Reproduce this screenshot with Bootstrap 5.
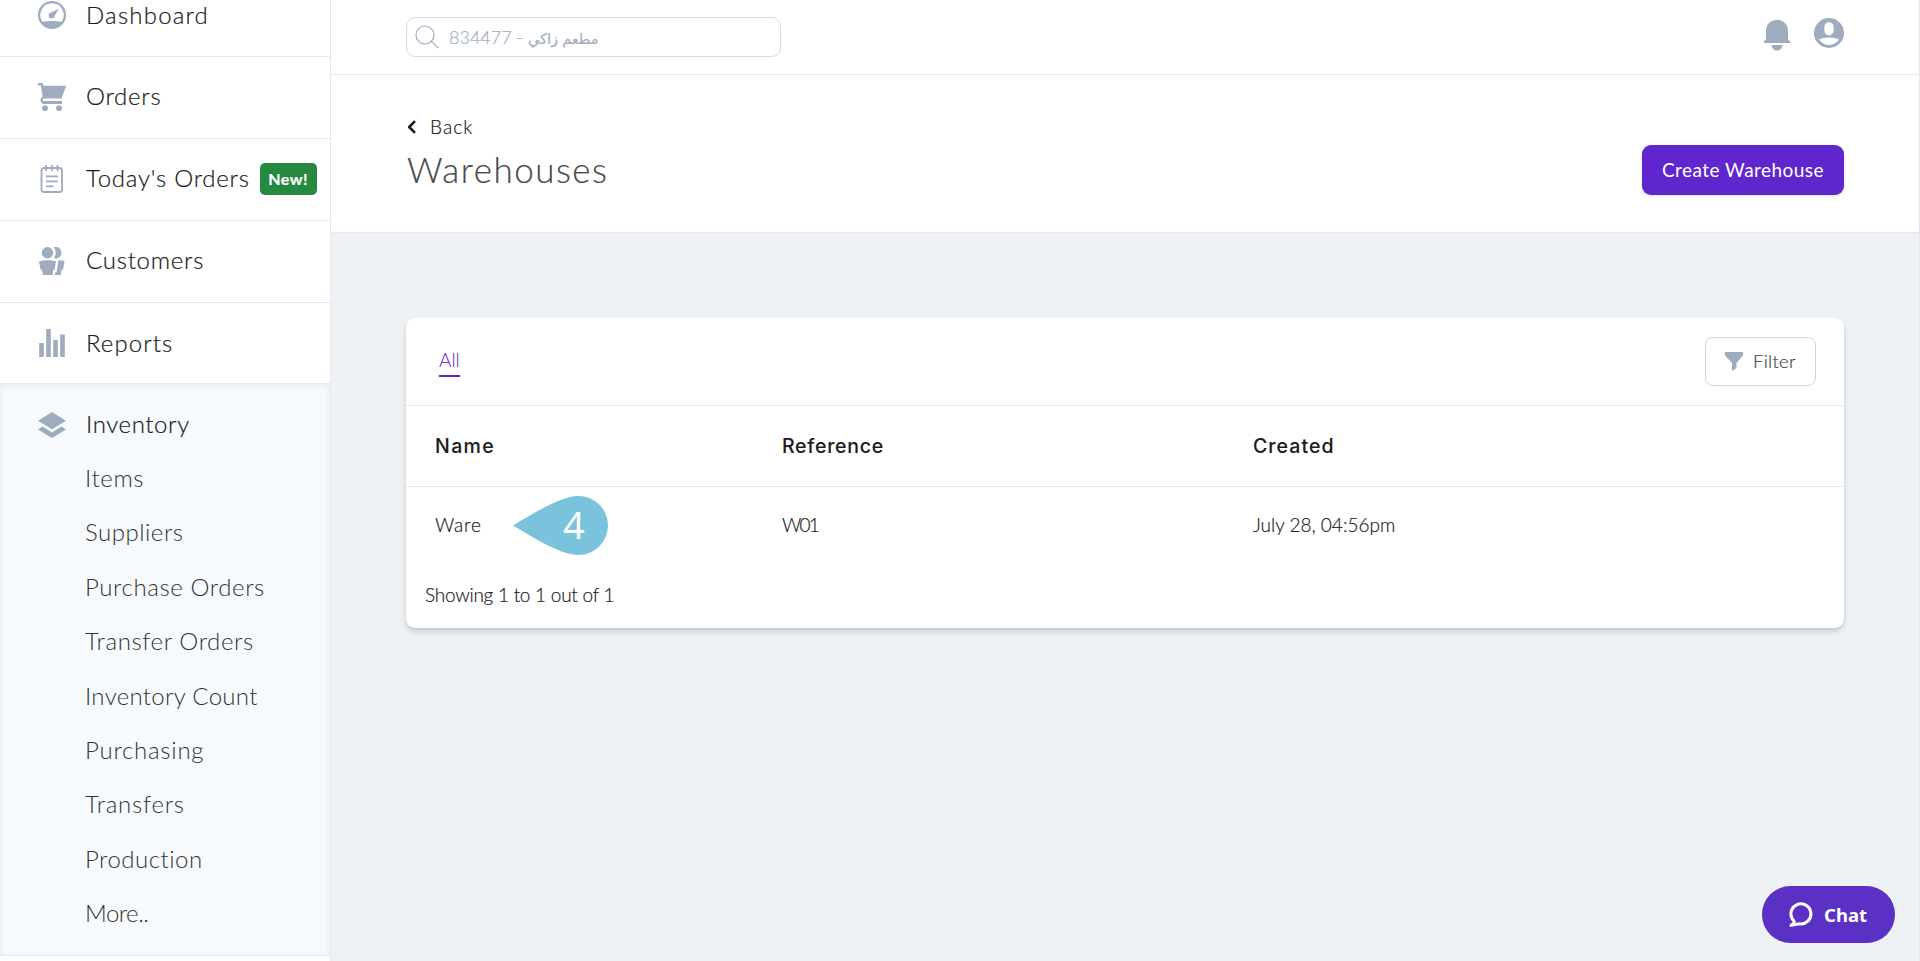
<!DOCTYPE html>
<html lang="en">
<head>
<meta charset="utf-8">
<title>Warehouses</title>
<link href="https://cdn.jsdelivr.net/npm/bootstrap@5.3.0/dist/css/bootstrap.min.css" rel="stylesheet">
<script src="https://cdn.jsdelivr.net/npm/bootstrap@5.3.0/dist/js/bootstrap.bundle.min.js" defer></script>
<style>
  :root { --line: #e4e8f5; --ico: #9fabbe; --brand: #5f26cd; }
  body { font-family: Lato, "Liberation Sans", sans-serif; font-weight: 300; font-size: 19px; color: #1c1c1c; background: #eef2f5; height: 961px; overflow: hidden; -webkit-text-stroke: .2px; }
  svg { display: block; flex: none; }
  a { color: inherit; text-decoration: none; }
  .side { width: 331px; border-right: 1px solid var(--line); font-size: 24px; }
  .side-row { height: 82px; padding: 0 0 2px 38px; gap: 20px; border-bottom: 1px solid var(--line); white-space: nowrap; line-height: 32px; }
  .side-row span:not(.badge) { margin-top: -1px; }
  .side-row svg, .top svg, .btn-filter svg { fill: var(--ico); }
  .side-row.first { height: 57px; padding-bottom: 26px; }
  .side-row.last { height: 80px; padding-bottom: 0; border: 0; }
  .new-badge { background: #25893f; font: 700 16px/32px Lato, sans-serif; letter-spacing: .5px; width: 57px; height: 32px; padding: 0; border-radius: 5px; margin-left: -10px; }
  .panel { height: 573px; background: #f6fafd; border-bottom: 1px solid var(--line); box-shadow: inset 0 2px 6px rgba(0,0,0,.08); }
  .panel .side-row { height: 68px; padding: 15.5px 0 0 38px; border: 0; }
  .sub-link { height: 54.4px; line-height: 54.4px; padding-left: 85px; color: #333; -webkit-text-stroke: 0; }
  .main-col { border-right: 1px solid var(--line); }
  .top { height: 75px; padding: 0 75px; border-bottom: 1px solid var(--line); }
  .search { width: 375px; height: 40px; border: 1px solid #d5daea; border-radius: 9px; color: #a0aec0; padding-left: 8px; gap: 10px; font-size: 18px; letter-spacing: -1px; }
  .search svg { fill: none; }
  .ar { font: 14.500px "Liberation Sans", "DejaVu Sans", sans-serif; letter-spacing: 0; }
  .heading { height: 158px; padding: 38px 75px 0 75px; border-bottom: 1px solid var(--line); }
  .back-link { padding-left: 2px; gap: 14px; }
  .page-title { font-size: 35px; font-weight: 300; line-height: 44px; color: #4a4a4a; letter-spacing: 1.5px; margin: 5px 0 0 1px; }
  .btn-brand, .btn-brand:hover { width: 202px; height: 50px; background: var(--brand); color: #fff; border: 0; border-radius: 9px; font-size: 19px; font-weight: 400; letter-spacing: .45px; padding: 0; box-shadow: 0 1px 3px rgba(0,0,0,.15); -webkit-text-stroke: 0; margin-top: 32px; }
  .panel-card { margin: 85px 75px 0 75px; height: 310px; border: 0; border-radius: 9px; box-shadow: 0 4px 6px rgba(0,0,0,.12), 0 2px 3px rgba(0,0,0,.07); }
  .tabs-bar { height: 88px; padding: 0 28px 0 33px; border-bottom: 1px solid var(--line); }
  .tab-on { color: var(--brand); border-bottom: 2px solid var(--brand); width: 21px; height: 35px; line-height: 35px; margin-bottom: 4px; white-space: nowrap; -webkit-text-stroke: 0; }
  .btn-filter { width: 111px; height: 49px; border: 1px solid #cbd5e0; border-radius: 8px; color: #444; gap: 10px; padding: 0 0 0 19px; font-size: 18.5px; font-weight: 300; }
  .grid-table { table-layout: fixed; color: inherit; }
  .grid-table th { height: 80px; border-bottom: 1px solid var(--line); font: 500 19.5px Inter, sans-serif; -webkit-text-stroke: .1px; }
  .grid-table td { height: 77px; }
  .grid-table th, .grid-table td { padding: 0 0 0 29px; vertical-align: middle; }
  .col-name { width: 347px; } .col-ref { width: 471px; }
  .ref-code { letter-spacing: -1.8px; }
  .pin { left: 107px; top: 9px; width: 95px; height: 60px; }
  .pin span { position: absolute; left: 50px; top: -1px; font: 38px/59px "Noto Sans", sans-serif; color: #fff; -webkit-text-stroke: 0; }
  .count-note { padding-left: 19px; margin-top: 18px; letter-spacing: -.25px; }
  .chat { right: 25px; bottom: 18px; width: 133px; height: 57px; border-radius: 29px; background: #5a30c5; color: #fff; font: 700 18.5px "Noto Sans", sans-serif; gap: 11px; padding-left: 27px; -webkit-text-stroke: 0; }
  .k-5 { letter-spacing: -.5px; } .k3 { letter-spacing: .3px; } .k5 { letter-spacing: .5px; } .k6 { letter-spacing: .6px; }
  .k8 { letter-spacing: .75px; } .k12 { letter-spacing: 1.05px; } .k13 { letter-spacing: 1.2px; } .k16 { letter-spacing: 1.4px; }
</style>
</head>
<body class="d-flex position-relative">
<nav class="side bg-white flex-shrink-0 vh-100">
  <a class="side-row first d-flex align-items-center" href="#">
    <svg width="28" height="28" viewBox="0 0 28 28"><path fill-rule="evenodd" d="M14 0a14 14 0 1 0 0 28a14 14 0 0 0 0-28zm0 2.300a11.700 11.700 0 0 1 9.500 18.500C21 20.300 17.500 20 14 20s-7 .3-9.500.8A11.700 11.700 0 0 1 14 2.300z"/><path d="M20.800 7.700l-4.200 7a3 3 0 1 1-3.200-3.200z"/></svg>
    <span class="k13">Dashboard</span></a>
  <a class="side-row d-flex align-items-center" href="#">
    <svg width="28" height="28" viewBox="0 0 28 28"><path d="M0 0h4.600l1 2.800H28l-4.300 12.600H6.200a1.300 1.300 0 0 0 0 2.700H24V21H5.300a4 4 0 0 1-.7-7.400L2.800 2.500H0z"/><circle cx="7" cy="25.200" r="2.900"/><circle cx="21" cy="25.200" r="2.900"/></svg>
    <span class="k8">Orders</span></a>
  <a class="side-row d-flex align-items-center" href="#">
    <svg width="28" height="28" viewBox="0 0 28 28"><g fill="none" stroke="#9fabbe" stroke-width="1.800"><rect x="3.500" y="3" width="20.500" height="24" rx="2.500"/><path d="M8 0v6M13.800 0v6M19.500 0v6M8 11.300h12M8 16.300h12M8 21.300h7.500"/></g></svg>
    <span class="k8">Today's Orders</span><span class="new-badge badge">New!</span></a>
  <a class="side-row d-flex align-items-center" href="#">
    <svg width="28" height="28" viewBox="0 0 28 28"><circle cx="9.500" cy="5.700" r="5.700"/><path d="M15.700.4a5.700 5.700 0 1 1 0 10.600a7.800 7.800 0 0 0 0-10.600zM1 14.300c4-1.500 13-1.500 17 0l-1.500 8.500h-1.300L14.500 28h-9.700l-.8-5.200H2.600zM20.500 13.300c2.400 0 4.500.4 6 1L25 22.800h-1.400L22.800 28h-6.200l.7-2.700h1.200z"/></svg>
    <span class="k8">Customers</span></a>
  <a class="side-row last d-flex align-items-center" href="#">
    <svg width="28" height="28" viewBox="0 0 28 28"><path d="M1.200 14h4.600v14H1.200zM8.200 0h4.600v28H8.200zM15.200 11h4.600v17h-4.600zM22.200 5.500h4.600V28h-4.600z"/></svg>
    <span class="k12">Reports</span></a>
  <div class="panel d-flex flex-column">
    <a class="side-row d-flex align-items-center flex-shrink-0" href="#">
      <svg width="28" height="26" viewBox="0 0 28 26"><path d="M14 0l14 8.700-14 8.600L0 8.700zM0 17.500l4.600-2.900L14 20.400l9.400-5.800 4.600 2.900L14 26z"/></svg>
      <span class="k6">Inventory</span></a>
    <a class="sub-link k6" href="#">Items</a>
    <a class="sub-link k5" href="#">Suppliers</a>
    <a class="sub-link k6" href="#">Purchase Orders</a>
    <a class="sub-link k6" href="#">Transfer Orders</a>
    <a class="sub-link k3" href="#">Inventory Count</a>
    <a class="sub-link k8" href="#">Purchasing</a>
    <a class="sub-link k8" href="#">Transfers</a>
    <a class="sub-link k5" href="#">Production</a>
    <a class="sub-link k-5" href="#">More..</a>
  </div>
</nav>
<main class="main-col flex-grow-1 vh-100">
  <header class="top bg-white d-flex align-items-center justify-content-between">
    <div class="search d-flex align-items-center text-nowrap">
      <svg width="24" height="24" viewBox="0 0 24 24" stroke="#a0aec0" stroke-width="1.200"><circle cx="10" cy="10" r="9"/><path d="M16.200 16.200l7 7"/></svg>
      <span>834477 - <bdi class="ar">مطعم زاكي</bdi></span>
    </div>
    <div class="d-flex align-items-center pb-2">
      <svg class="me-4 mt-1" width="26" height="31" viewBox="0 0 26 31"><path d="M13 0C6.500 0 2 4.800 2 10.500V19L0 21.500V23h26v-1.500L24 19v-8.500C24 4.800 19.500 0 13 0zM7.500 25h11a5.500 5.500 0 0 1-11 0z"/></svg>
      <svg width="30" height="30" viewBox="0 0 30 30"><path fill-rule="evenodd" d="M15 0a15 15 0 1 0 0 30a15 15 0 0 0 0-30zm0 4.200c3 0 4.700 2.300 4.700 5.500v2c0 3.200-1.700 5.500-4.700 5.500s-4.700-2.300-4.700-5.500v-2c0-3.200 1.700-5.500 4.700-5.500zM5 21.500c5-2.700 15-2.700 20 0-5 7.300-15 7.300-20 0z"/></svg>
    </div>
  </header>
  <section class="heading bg-white d-flex justify-content-between align-items-start">
    <div>
      <a class="back-link d-flex align-items-center" href="#">
        <svg width="8" height="14" viewBox="1 0 8 14" fill="none" stroke="#1c1c1c" stroke-width="2.600"><path d="M8 1.200L2.200 7 8 12.800"/></svg>
        <span class="k12">Back</span></a>
      <h1 class="page-title">Warehouses</h1>
    </div>
    <button class="btn btn-brand">Create Warehouse</button>
  </section>
  <section class="panel-card card">
    <div class="tabs-bar d-flex align-items-center justify-content-between flex-shrink-0">
      <a class="tab-on" href="#">All</a>
      <button class="btn btn-filter d-flex align-items-center">
        <svg width="18" height="19" viewBox="0 0 18 19"><path d="M0 0h18v3.500L11.500 11v5L7 19v-8L0 3.500z"/></svg>
        <span class="k3">Filter</span></button>
    </div>
    <table class="grid-table w-100">
      <colgroup><col class="col-name"><col class="col-ref"><col></colgroup>
      <thead><tr><th class="k16">Name</th><th class="k8">Reference</th><th class="k12">Created</th></tr></thead>
      <tbody><tr>
        <td class="position-relative"><span class="k8">Ware</span>
          <div class="pin position-absolute"><svg width="95" height="59" viewBox="0 0 95 59"><path fill="#79c3dc" d="M0 29.500C25 14.500 49 0 65.500 0a29.500 29.500 0 0 1 0 59C49 59 25 44.500 0 29.500z"/></svg><span>4</span></div></td>
        <td class="ref-code">W01</td>
        <td>July 28, 04:56pm</td></tr></tbody>
    </table>
    <div class="count-note">Showing 1 to 1 out of 1</div>
  </section>
</main>
<a class="chat position-absolute d-flex align-items-center" href="#">
  <svg width="24" height="25" viewBox="0 0 24 25" fill="none" stroke="#fff" stroke-width="3"><path stroke-linejoin="round" d="M5.200 19.300A10 10 0 1 1 10 21.700L2 23.400c2-1 3.300-2.400 3.200-4.100z"/></svg>
  <span>Chat</span></a>
</body>
</html>
